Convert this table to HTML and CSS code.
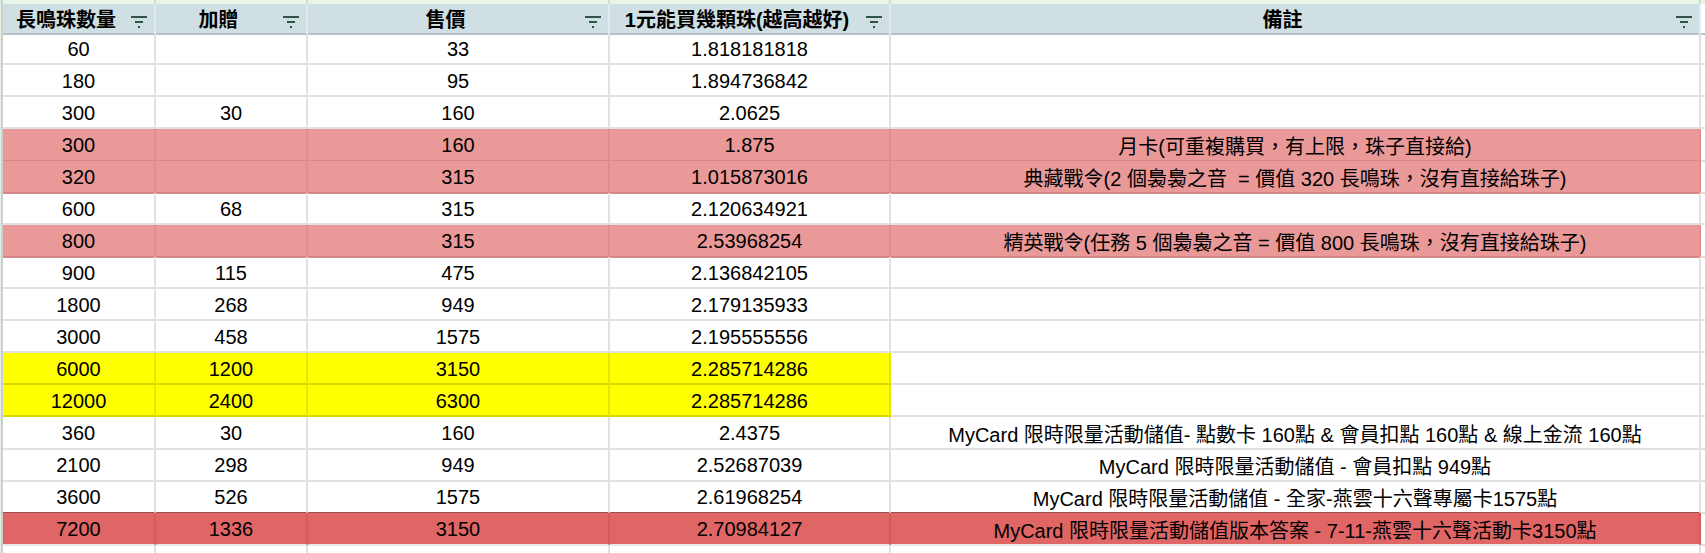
FILE: index.html
```html
<!DOCTYPE html>
<html lang="zh-Hant">
<head>
<meta charset="utf-8">
<title>長鳴珠價格比較</title>
<link rel="stylesheet" href="styles.css">
</head>
<body>
<div class="sheet">
  <div class="row strip">
    <div class="stub"></div><div class="cell"></div><div class="cell"></div><div class="cell"></div><div class="cell"></div><div class="cell"></div><div class="edge"></div>
  </div>
  <div class="row head">
    <div class="stub"></div>
    <div class="cell"><span class="label">長鳴珠數量</span><svg class="filter" viewBox="0 0 16 12"><path d="M0 1h16M4 6h8M7 11h2" /></svg></div>
    <div class="cell"><span class="label">加贈</span><svg class="filter" viewBox="0 0 16 12"><path d="M0 1h16M4 6h8M7 11h2" /></svg></div>
    <div class="cell"><span class="label">售價</span><svg class="filter" viewBox="0 0 16 12"><path d="M0 1h16M4 6h8M7 11h2" /></svg></div>
    <div class="cell"><span class="label">1元能買幾顆珠(越高越好)</span><svg class="filter" viewBox="0 0 16 12"><path d="M0 1h16M4 6h8M7 11h2" /></svg></div>
    <div class="cell"><span class="label">備註</span><svg class="filter" viewBox="0 0 16 12"><path d="M0 1h16M4 6h8M7 11h2" /></svg></div>
    <div class="edge"></div>
  </div>
  <div class="row"><div class="stub"></div><div class="cell">60</div><div class="cell"></div><div class="cell">33</div><div class="cell">1.818181818</div><div class="cell"></div><div class="edge"></div></div>
  <div class="row"><div class="stub"></div><div class="cell">180</div><div class="cell"></div><div class="cell">95</div><div class="cell">1.894736842</div><div class="cell"></div><div class="edge"></div></div>
  <div class="row"><div class="stub"></div><div class="cell">300</div><div class="cell">30</div><div class="cell">160</div><div class="cell">2.0625</div><div class="cell"></div><div class="edge"></div></div>
  <div class="row pink"><div class="stub"></div><div class="cell">300</div><div class="cell"></div><div class="cell">160</div><div class="cell">1.875</div><div class="cell">月卡(可重複購買，有上限，珠子直接給)</div><div class="edge"></div></div>
  <div class="row pink"><div class="stub"></div><div class="cell">320</div><div class="cell"></div><div class="cell">315</div><div class="cell">1.015873016</div><div class="cell">典藏戰令(2 個裊裊之音&nbsp; = 價值 320 長鳴珠，沒有直接給珠子)</div><div class="edge"></div></div>
  <div class="row"><div class="stub"></div><div class="cell">600</div><div class="cell">68</div><div class="cell">315</div><div class="cell">2.120634921</div><div class="cell"></div><div class="edge"></div></div>
  <div class="row pink"><div class="stub"></div><div class="cell">800</div><div class="cell"></div><div class="cell">315</div><div class="cell">2.53968254</div><div class="cell">精英戰令(任務 5 個裊裊之音 = 價值 800 長鳴珠，沒有直接給珠子)</div><div class="edge"></div></div>
  <div class="row"><div class="stub"></div><div class="cell">900</div><div class="cell">115</div><div class="cell">475</div><div class="cell">2.136842105</div><div class="cell"></div><div class="edge"></div></div>
  <div class="row"><div class="stub"></div><div class="cell">1800</div><div class="cell">268</div><div class="cell">949</div><div class="cell">2.179135933</div><div class="cell"></div><div class="edge"></div></div>
  <div class="row"><div class="stub"></div><div class="cell">3000</div><div class="cell">458</div><div class="cell">1575</div><div class="cell">2.195555556</div><div class="cell"></div><div class="edge"></div></div>
  <div class="row"><div class="stub"></div><div class="cell yellow">6000</div><div class="cell yellow">1200</div><div class="cell yellow">3150</div><div class="cell yellow">2.285714286</div><div class="cell"></div><div class="edge"></div></div>
  <div class="row"><div class="stub"></div><div class="cell yellow">12000</div><div class="cell yellow">2400</div><div class="cell yellow">6300</div><div class="cell yellow">2.285714286</div><div class="cell"></div><div class="edge"></div></div>
  <div class="row"><div class="stub"></div><div class="cell">360</div><div class="cell">30</div><div class="cell">160</div><div class="cell">2.4375</div><div class="cell">MyCard 限時限量活動儲值- 點數卡 160點 &amp; 會員扣點 160點 &amp; 線上金流 160點</div><div class="edge"></div></div>
  <div class="row"><div class="stub"></div><div class="cell">2100</div><div class="cell">298</div><div class="cell">949</div><div class="cell">2.52687039</div><div class="cell">MyCard 限時限量活動儲值 - 會員扣點 949點</div><div class="edge"></div></div>
  <div class="row before-red"><div class="stub"></div><div class="cell">3600</div><div class="cell">526</div><div class="cell">1575</div><div class="cell">2.61968254</div><div class="cell">MyCard 限時限量活動儲值 - 全家-燕雲十六聲專屬卡1575點</div><div class="edge"></div></div>
  <div class="row red"><div class="stub"></div><div class="cell">7200</div><div class="cell">1336</div><div class="cell">3150</div><div class="cell">2.70984127</div><div class="cell">MyCard 限時限量活動儲值版本答案 - 7-11-燕雲十六聲活動卡3150點</div><div class="edge"></div></div>
  <div class="row tail"><div class="stub"></div><div class="cell"></div><div class="cell"></div><div class="cell"></div><div class="cell"></div><div class="cell"></div><div class="edge"></div></div>
</div>
</body>
</html>
```

FILE: styles.css
```css
html, body {
  margin: 0;
  padding: 0;
  background: #ffffff;
}

.sheet {
  width: 1705px;
  height: 553px;
  overflow: hidden;
  font-family: "Liberation Sans", Arial, "Noto Sans CJK TC", sans-serif;
  font-size: 20px;
  color: #000000;
}

.row {
  display: grid;
  grid-template-columns: 3px 153px 152px 302px 281px 810px 4px;
  height: 32px;
}

.cell,
.stub,
.edge {
  box-sizing: border-box;
  border-right: 2px solid #e1e1e1;
  border-bottom: 2px solid #e1e1e1;
}

.cell {
  display: flex;
  align-items: center;
  justify-content: center;
  white-space: nowrap;
  padding-top: 2px;
  position: relative;
}

.stub {
  background: #e5efe6;
  border-right-color: #c9d1ca;
  border-bottom-color: #d5ddd6;
}

.edge {
  border-right: none;
}

/* column-letter strip above the header */
.strip {
  height: 4px;
}

.strip .cell,
.strip .edge {
  background: #eaf5ea;
  border-bottom: none;
  border-right-color: #d2dcd2;
}

/* header row */
.head {
  height: 29px;
}

.head .cell {
  background: #d0dfe3;
  border-bottom-color: #b3c3c8;
  border-right-color: #e3ebed;
  font-weight: bold;
  padding: 0 25px 0 0;
}

.head .edge {
  background: #ffffff;
  border-bottom-color: #b3c3c8;
}

.filter {
  position: absolute;
  right: 7px;
  top: 12px;
  width: 16px;
  height: 12px;
  fill: none;
  stroke: #2f5446;
  stroke-width: 1.8;
}

/* highlighted rows */
.pink .cell {
  background: #ea9999;
  border-right-color: #dd8e8e;
  border-bottom-color: #d78787;
}

.cell.yellow {
  background: #ffff00;
  border-right-color: #e6e600;
  border-bottom-color: #d8d800;
}

.before-red .cell {
  border-bottom-color: #9a5050;
}

.red .cell {
  background: #e06666;
  border-right-color: #d25c5c;
  border-bottom-color: #e9e9e9;
}

.tail .cell {
  border-bottom: none;
}
```
